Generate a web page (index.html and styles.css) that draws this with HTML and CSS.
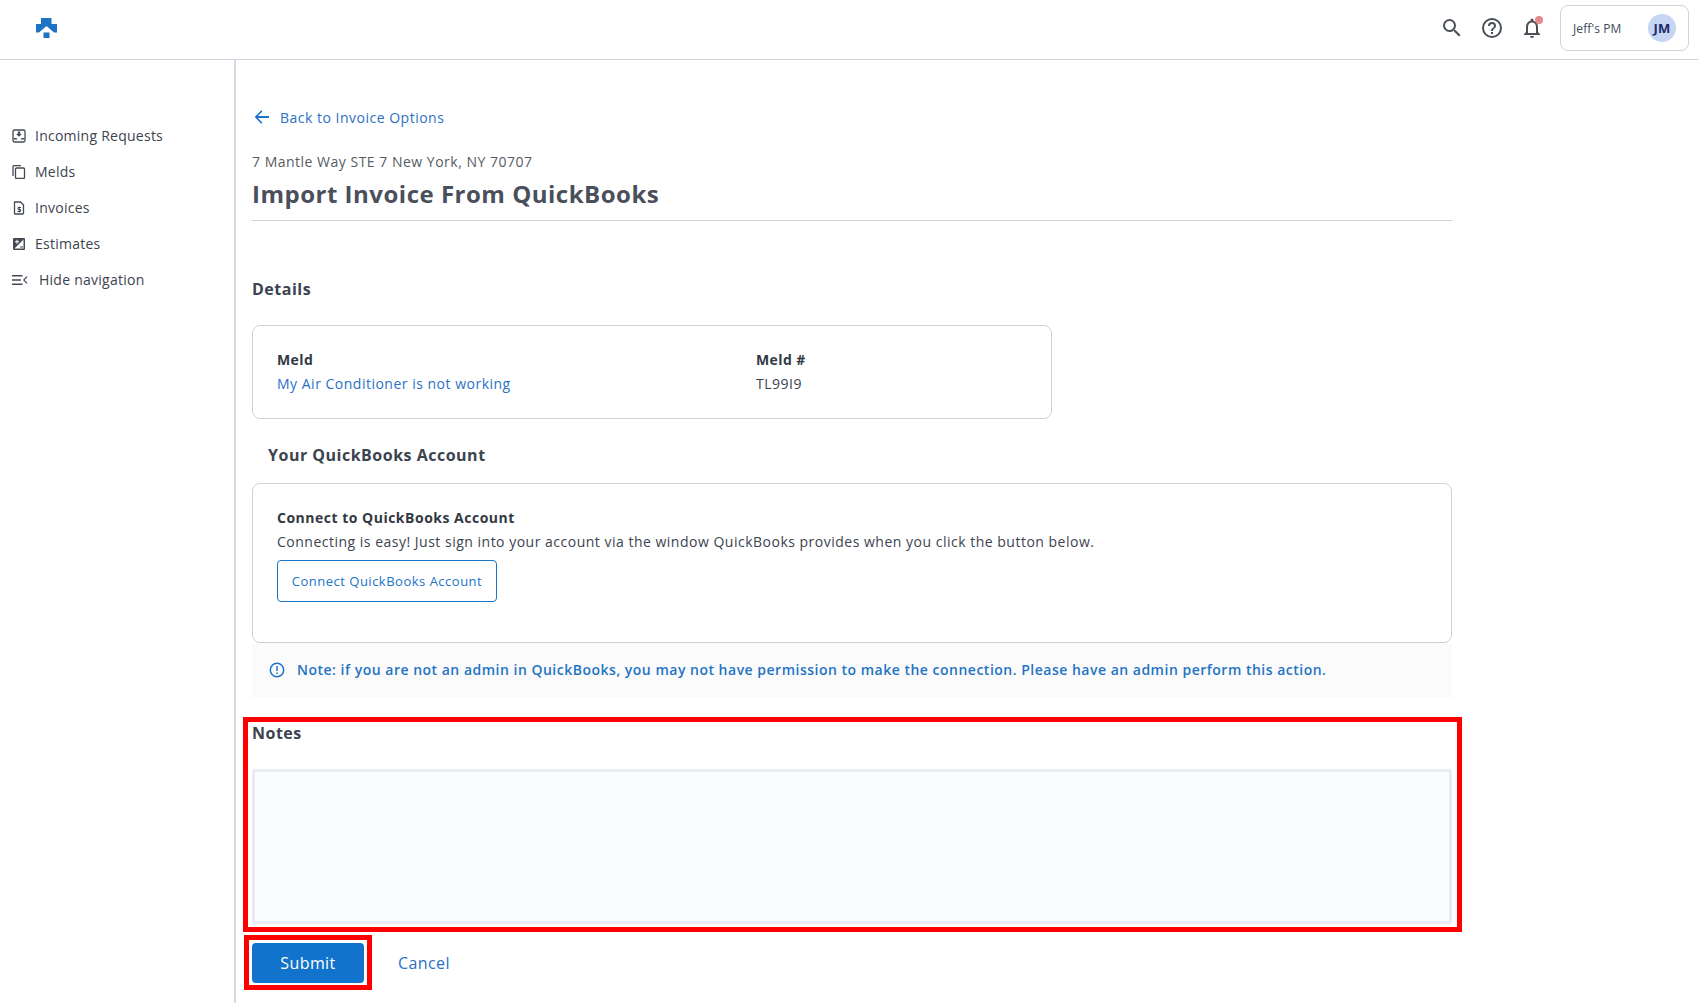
FILE: index.html
```html
<!DOCTYPE html>
<html lang="en">
<head>
<meta charset="utf-8">
<title>Import Invoice From QuickBooks</title>
<link rel="stylesheet" href="styles.css">
</head>
<body>
<header class="topbar">
  <svg class="logo" viewBox="0 0 21 20" width="21" height="20"><path fill="#1d74c4" d="M5 0H15.500V6H21V14.500H18L10.500 8L3 14.500H0V6H5Z"/><rect fill="#1d74c4" x="7.500" y="14.500" width="6" height="5.500"/></svg>
  <div class="top-actions">
    <svg class="ti" viewBox="0 0 24 24" width="24" height="24"><path d="M15.500 14h-.79l-.28-.27A6.471 6.471 0 0 0 16 9.500 6.500 6.500 0 1 0 9.500 16c1.610 0 3.090-.59 4.230-1.570l.27.28v.79l5 4.990L20.490 19l-4.990-5zm-6 0C7.010 14 5 11.990 5 9.500S7.010 5 9.500 5 14 7.010 14 9.500 11.990 14 9.500 14z"/></svg>
    <svg class="ti" viewBox="0 0 24 24" width="24" height="24"><path d="M11 18h2v-2h-2v2zm1-16a10 10 0 1 0 0 20 10 10 0 0 0 0-20zm0 18a8 8 0 1 1 0-16 8 8 0 0 1 0 16zm0-14a4 4 0 0 0-4 4h2a2 2 0 1 1 4 0c0 2-3 1.750-3 5h2c0-2.250 3-2.500 3-5a4 4 0 0 0-4-4z"/></svg>
    <span class="bell">
      <svg class="ti" viewBox="0 0 24 24" width="24" height="24"><path d="M12 22a2 2 0 0 0 2-2h-4a2 2 0 0 0 2 2zm6-6v-5c0-3.100-1.600-5.600-4.500-6.300V4a1.500 1.500 0 0 0-3 0v.7C7.600 5.400 6 7.900 6 11v5l-2 2v1h16v-1l-2-2zm-2 1H8v-6c0-2.500 1.500-4.500 4-4.500s4 2 4 4.500v6z"/></svg>
      <i class="dot"></i>
    </span>
    <div class="user"><span>Jeff's PM</span><b class="avatar">JM</b></div>
  </div>
</header>
<div class="shell">
  <nav class="side">
    <a class="nav"><svg viewBox="0 0 14 14" width="14" height="14"><rect x="1" y="1" width="12" height="12" rx="1.500" class="ol"/><path d="M5.800 2.500h2.400v2.500h1.700L7 7.800 4.100 5h1.700zM1.500 9h3l1 1.500h3L9.500 9h3v1.500H1.500z"/></svg><span>Incoming Requests</span></a>
    <a class="nav"><svg viewBox="0 0 14 14" width="14" height="14"><path class="ol" d="M1 11V1.500Q1 .7 1.800.7H9"/><rect x="3.500" y="3" width="9" height="10.500" rx="1" class="ol"/></svg><span>Melds</span></a>
    <a class="nav"><svg viewBox="0 0 14 14" width="14" height="14"><path class="ol" d="M2.500 1h6l3 3v8.300q0 .7-.7.7H3.200q-.7 0-.7-.7z"/><path class="ol thin" d="M9 6.500H6v2h2.500v2H5.500M7.200 5.500v6"/></svg><span>Invoices</span></a>
    <a class="nav"><svg viewBox="0 0 14 14" width="14" height="14"><path d="M2 1h10q1 0 1 1v10q0 1-1 1H2q-1 0-1-1V2q0-1 1-1zm9.500 1.500L2.500 11.500h9zM3 4.200v1h1.500v1.500h1V5.200H7v-1H5.500V2.700h-1v1.500zM8 9.500h3v1H8z" fill-rule="evenodd"/></svg><span>Estimates</span></a>
    <a class="nav hide"><svg viewBox="0 0 16 14" width="16" height="14"><path d="M0 2h10.500v1.500H0zM0 6.200h9v1.500H0zM0 10.500h10.500V12H0zM15.500 4l-3 3 3 3-1 .8L11 7l3.500-3.800z"/></svg><span>Hide navigation</span></a>
  </nav>
  <main class="main">
    <a class="back"><svg viewBox="0 0 16 16" width="16" height="16"><path d="M15 7H3.800l4.600-4.600L7.300 1.300.7 8l6.600 6.700 1.100-1.100L3.800 9H15z"/></svg><span>Back to Invoice Options</span></a>
    <p class="address">7 Mantle Way STE 7 New York, NY 70707</p>
    <h1 class="title">Import Invoice From QuickBooks</h1>
    <h2 class="section">Details</h2>
    <section class="card details">
      <div class="field"><strong>Meld</strong><a>My Air Conditioner is not working</a></div>
      <div class="field"><strong>Meld #</strong><span>TL99I9</span></div>
    </section>
    <h2 class="section account">Your QuickBooks Account</h2>
    <section class="card connect">
      <strong>Connect to QuickBooks Account</strong>
      <p>Connecting is easy! Just sign into your account via the window QuickBooks provides when you click the button below.</p>
      <button class="outline" type="button">Connect QuickBooks Account</button>
    </section>
    <div class="note">
      <svg viewBox="0 0 16 16" width="16" height="16"><circle cx="8" cy="8" r="6.700"/><path d="M8 4v5M8 10.500v1.500"/></svg>
      <span>Note: if you are not an admin in QuickBooks, you may not have permission to make the connection. Please have an admin perform this action.</span>
    </div>
    <div class="notes-wrap">
      <label class="notes-label" for="notes">Notes</label>
      <textarea id="notes" class="notes"></textarea>
      <i class="mark mark-notes"></i>
    </div>
    <div class="actions">
      <span class="submit-wrap"><button class="primary" type="button">Submit</button><i class="mark mark-submit"></i></span>
      <a class="cancel">Cancel</a>
    </div>
  </main>
</div>
</body>
</html>
```
FILE: styles.css
```css
* { box-sizing: border-box; }
html, body { height: 100%; }
body { margin: 0; background: #fff; font-family: "Open Sans", sans-serif; color: #3c4350; overflow: hidden; }
.topbar { height: 60px; border-bottom: 1px solid #ccd2da; display: flex; align-items: center; justify-content: space-between; padding: 0 9px 3px 36px; }
.logo { display: block; margin-top: -1px; }
.top-actions { display: flex; align-items: center; gap: 16px; }
.ti { display: block; fill: #4a4f58; }
.bell { position: relative; display: block; }
.dot { position: absolute; top: 0; right: 1px; width: 8px; height: 8px; border-radius: 50%; background: #e58a8a; }
.user { width: 129px; height: 46px; margin-left: 0; border: 1px solid #ccd4de; border-radius: 8px; display: flex; align-items: center; justify-content: space-between; padding: 0 12px; font-size: 12px; letter-spacing: .1px; color: #3e4a5c; }
.avatar { width: 28px; height: 28px; border-radius: 50%; background: #c5d5f2; color: #1d2a6b; font-size: 13px; font-weight: 700; display: flex; align-items: center; justify-content: center; }
.shell { display: flex; height: 943px; }
.side { width: 236px; flex: none; border-right: 2px solid #d4dae3; padding: 57px 0 0 12px; }
.nav { height: 36px; display: flex; align-items: center; gap: 9px; font-size: 14px; letter-spacing: .25px; color: #3c4350; }
.nav svg { flex: none; fill: #444a54; margin-top: 1px; }
.nav .ol { fill: none; stroke: #444a54; stroke-width: 1.300; }
.nav .thin { stroke-width: 1; }
.nav.hide { gap: 11px; }
.main { width: 1200px; margin-left: 16px; position: relative; padding-top: 45px; }
.back { display: flex; align-items: center; gap: 10px; padding-left: 2px; height: 24px; font-size: 14px; letter-spacing: .5px; color: #2b70c6; }
.back svg { fill: #1c74c8; }
.address { margin: 23px 0 0; height: 20px; line-height: 20px; font-size: 14px; letter-spacing: .5px; color: #565b64; }
.title { margin: 3px 0 0; height: 46px; line-height: 37px; border-bottom: 1px solid #ccd2da; font-size: 24px; font-weight: 700; letter-spacing: .5px; color: #4a4f5c; }
.section { margin: 56px 0 0; height: 24px; line-height: 24px; font-size: 16px; font-weight: 700; letter-spacing: .5px; color: #3c4350; }
.card { border: 1px solid #ccd2da; border-radius: 8px; background: #fff; }
.details { width: 800px; height: 94px; margin-top: 24px; padding: 22px 24px; display: flex; font-size: 14px; letter-spacing: .5px; line-height: 24px; color: #3c4350; }
.field { display: flex; flex-direction: column; }
.field:first-child { width: 479px; }
.field strong { font-weight: 700; letter-spacing: .4px; color: #333944; }
.field a { color: #2b70c6; }
.account { margin: 24px 0 0 16px; }
.connect { height: 160px; margin-top: 16px; padding: 22px 24px; font-size: 14px; letter-spacing: .5px; line-height: 24px; }
.connect strong { display: block; font-weight: 700; color: #333944; }
.connect p { margin: 0; color: #3c4350; }
.outline { display: block; margin-top: 6px; width: 220px; height: 42px; padding: 0; background: #fff; border: 1px solid #1c74c8; border-radius: 4px; font: 13px "Open Sans", sans-serif; letter-spacing: .5px; color: #1c74c8; }
.note { height: 55px; background: #fbfbfc; display: flex; align-items: center; gap: 12px; padding: 0 0 2px 17px; font-size: 14px; font-weight: 600; letter-spacing: .5px; color: #1f74c4; }
.note svg { flex: none; fill: none; stroke: #1c74c8; stroke-width: 1.500; }
.notes-wrap { position: relative; margin-top: 23px; }
.notes-label { display: block; height: 24px; line-height: 24px; font-size: 16px; font-weight: 700; letter-spacing: .5px; color: #3c4350; }
.notes { display: block; width: 1200px; height: 155px; margin: 24px 0 0; background: #fbfcfe; border: 3px solid #e8ebf2; border-radius: 3px; resize: none; outline: none; }
.actions { display: flex; align-items: center; margin-top: 19px; }
.submit-wrap { position: relative; display: block; }
.primary { display: block; width: 112px; height: 40px; padding: 0; border: 0; border-radius: 4px; background: #1273cc; color: #fff; font: 500 16px "Open Sans", sans-serif; letter-spacing: .4px; }
.cancel { margin-left: 34px; font-size: 16px; letter-spacing: .4px; color: #2b70c6; }
.mark { position: absolute; border: 5px solid #f00; pointer-events: none; }
.mark-notes { top: -4px; left: -9px; width: 1219px; height: 215px; }
.mark-submit { top: -8px; left: -8px; width: 128px; height: 55px; }
```
